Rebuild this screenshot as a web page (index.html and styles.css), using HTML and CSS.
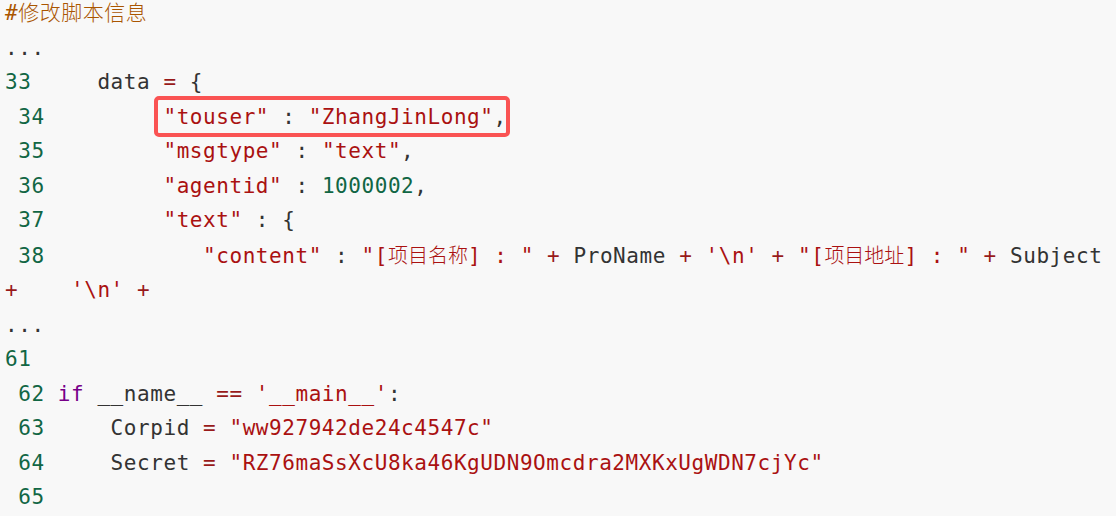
FILE: index.html
```html
<!DOCTYPE html>
<html lang="zh-CN">
<head>
<meta charset="utf-8">
<title>修改脚本信息</title>
<link rel="stylesheet" href="styles.css">
</head>
<body>
<pre class="code"><span class="cm"><span class="hash">#</span><span class="cjk-c">修改脚本信息</span></span>
...
<span class="num">33</span>     data <span class="op">=</span> {
 <span class="num">34</span>         <span class="mark"><span class="str">"touser"</span> : <span class="str">"ZhangJinLong"</span>,</span>
 <span class="num">35</span>         <span class="str">"msgtype"</span> : <span class="str">"text"</span>,
 <span class="num">36</span>         <span class="str">"agentid"</span> : <span class="num">1000002</span>,
 <span class="num">37</span>         <span class="str">"text"</span> : {
 <span class="num">38</span>            <span class="str">"content"</span> : <span class="str">"[<span class="cjk">项目名称</span>] : "</span> <span class="op">+</span> ProName <span class="op">+</span> <span class="str">'\n'</span> <span class="op">+</span> <span class="str">"[<span class="cjk">项目地址</span>] : "</span> <span class="op">+</span> Subject
<span class="op">+</span>    <span class="str">'\n'</span> <span class="op">+</span>
...
<span class="num">61</span>
 <span class="num">62</span> <span class="kw">if</span> __name__ <span class="op">==</span> <span class="str">'__main__'</span>:
 <span class="num">63</span>     Corpid <span class="op">=</span> <span class="str">"ww927942de24c4547c"</span>
 <span class="num">64</span>     Secret <span class="op">=</span> <span class="str">"RZ76maSsXcU8ka46KgUDN9Omcdra2MXKxUgWDN7cjYc"</span>
 <span class="num">65</span>
</pre>
</body>
</html>
```
FILE: styles.css
```css
html, body {
  margin: 0;
  padding: 0;
  background: #f8f8f8;
  overflow: hidden;
}

.code {
  margin: -6px 0 0 0;
  padding: 0 0 0 5px;
  font-family: "DejaVu Sans Mono", "Liberation Mono", "Noto Sans CJK SC", monospace;
  font-size: 21px;
  letter-spacing: 0.56px;
  line-height: 34.5px;
  color: #333333;
  white-space: pre;
  background: #f8f8f8;
}

.cm { color: #aa5500; }
.cjk-c {
  font-family: "Noto Sans CJK SC", sans-serif;
  font-size: 21px;
  letter-spacing: 0.5px;
  font-weight: 300;
}
.num { color: #116644; }
.str { color: #aa1111; }
.op { color: #981a1a; }
.kw { color: #770088; }

.cjk {
  font-family: "Noto Sans CJK SC", sans-serif;
  font-size: 20px;
  letter-spacing: 0;
  font-weight: 300;
}

.mark {
  display: inline-block;
  position: relative;
}
.mark::after {
  content: "";
  position: absolute;
  left: -9px;
  right: -3px;
  top: -4px;
  bottom: -3px;
  border: 4px solid #fa5353;
  border-radius: 5px;
}
```
